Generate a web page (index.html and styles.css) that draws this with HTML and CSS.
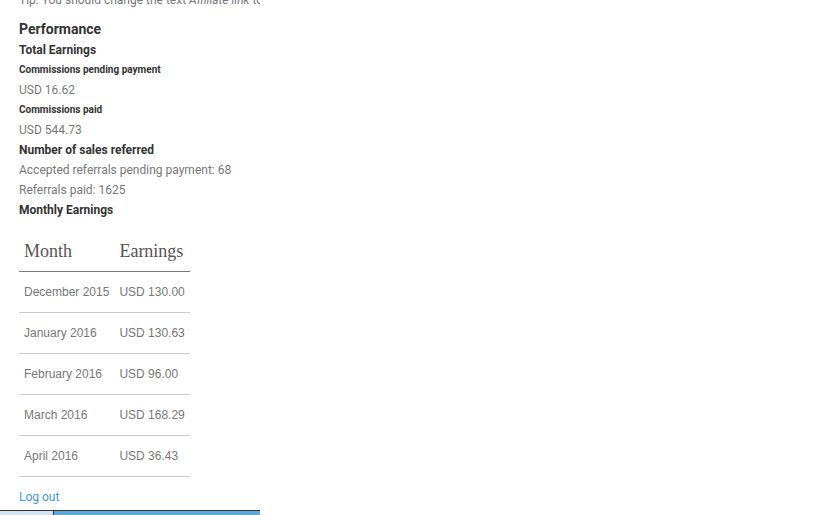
FILE: index.html
```html
<!DOCTYPE html>
<html>
<head>
<meta charset="utf-8">
<link rel="stylesheet" href="styles.css">
</head>
<body>
<div class="page">
  <div class="content">
    <p class="tip">Tip: You should change the text <em>Affiliate link</em> to something more appealing</p>
    <h2 class="h-perf">Performance</h2>
    <h3 class="h-sub">Total Earnings</h3>
    <h4 class="h-small">Commissions pending payment</h4>
    <p class="val">USD 16.62</p>
    <h4 class="h-small">Commissions paid</h4>
    <p class="val">USD 544.73</p>
    <h3 class="h-sub">Number of sales referred</h3>
    <p class="val">Accepted referrals pending payment: 68</p>
    <p class="val">Referrals paid: 1625</p>
    <h3 class="h-sub">Monthly Earnings</h3>
    <table class="earn">
      <thead>
        <tr><th>Month</th><th>Earnings</th></tr>
      </thead>
      <tbody>
        <tr><td>December 2015</td><td>USD 130.00</td></tr>
        <tr><td>January 2016</td><td>USD 130.63</td></tr>
        <tr><td>February 2016</td><td>USD 96.00</td></tr>
        <tr><td>March 2016</td><td>USD 168.29</td></tr>
        <tr><td>April 2016</td><td>USD 36.43</td></tr>
      </tbody>
    </table>
    <a class="logout" href="#">Log out</a>
  </div>
  <div class="bar"><div class="bar-fill"></div></div>
</div>
</body>
</html>
```
FILE: styles.css
```css
html, body {
  margin: 0;
  padding: 0;
  background: #fff;
}
.page {
  width: 260px;
  height: 515px;
  overflow: hidden;
  display: flex;
  flex-direction: column;
}
.content {
  flex: 1;
  padding: 0 0 0 19px;
  margin-top: -8px;
  font-family: Roboto, "Liberation Sans", sans-serif;
  white-space: nowrap;
}
.tip {
  margin: 0;
  font-size: 12px;
  line-height: 16px;
  color: #777;
}
.h-perf {
  margin: 12px 0 2px;
  font-size: 14px;
  line-height: 18px;
  font-weight: 700;
  color: #333;
}
.h-sub {
  margin: 0;
  font-size: 12px;
  line-height: 20px;
  font-weight: 700;
  color: #333;
}
.h-small {
  margin: 0;
  font-size: 10px;
  line-height: 20px;
  font-weight: 700;
  color: #333;
}
.val {
  margin: 0;
  font-size: 12px;
  line-height: 20px;
  color: #777;
}
.earn {
  border-collapse: collapse;
  margin-top: 13px;
  font-family: "Liberation Sans", Arial, sans-serif;
  font-size: 12px;
  color: #777;
}
.earn th {
  font-family: "Liberation Serif", "Times New Roman", serif;
  font-weight: 400;
  font-size: 18px;
  line-height: 20px;
  color: #555;
  text-align: left;
  padding: 8px 5px 10px;
  border-bottom: 1px solid #777;
}
.earn th:last-child {
  padding-right: 6px;
}
.earn td {
  padding: 13px 5px 13px;
  line-height: 14px;
  border-bottom: 1px solid #ccc;
}
.logout {
  display: block;
  margin-top: 12px;
  font-size: 12px;
  line-height: 16px;
  color: #3a9ad9;
  text-decoration: none;
}
.bar {
  height: 4px;
  border-top: 1px solid #333;
  background: #d4e4ee;
  display: flex;
}
.bar-fill {
  margin-left: 53px;
  flex: 1;
  background: #5aa8dc;
  border-left: 1px solid #333;
}
```
